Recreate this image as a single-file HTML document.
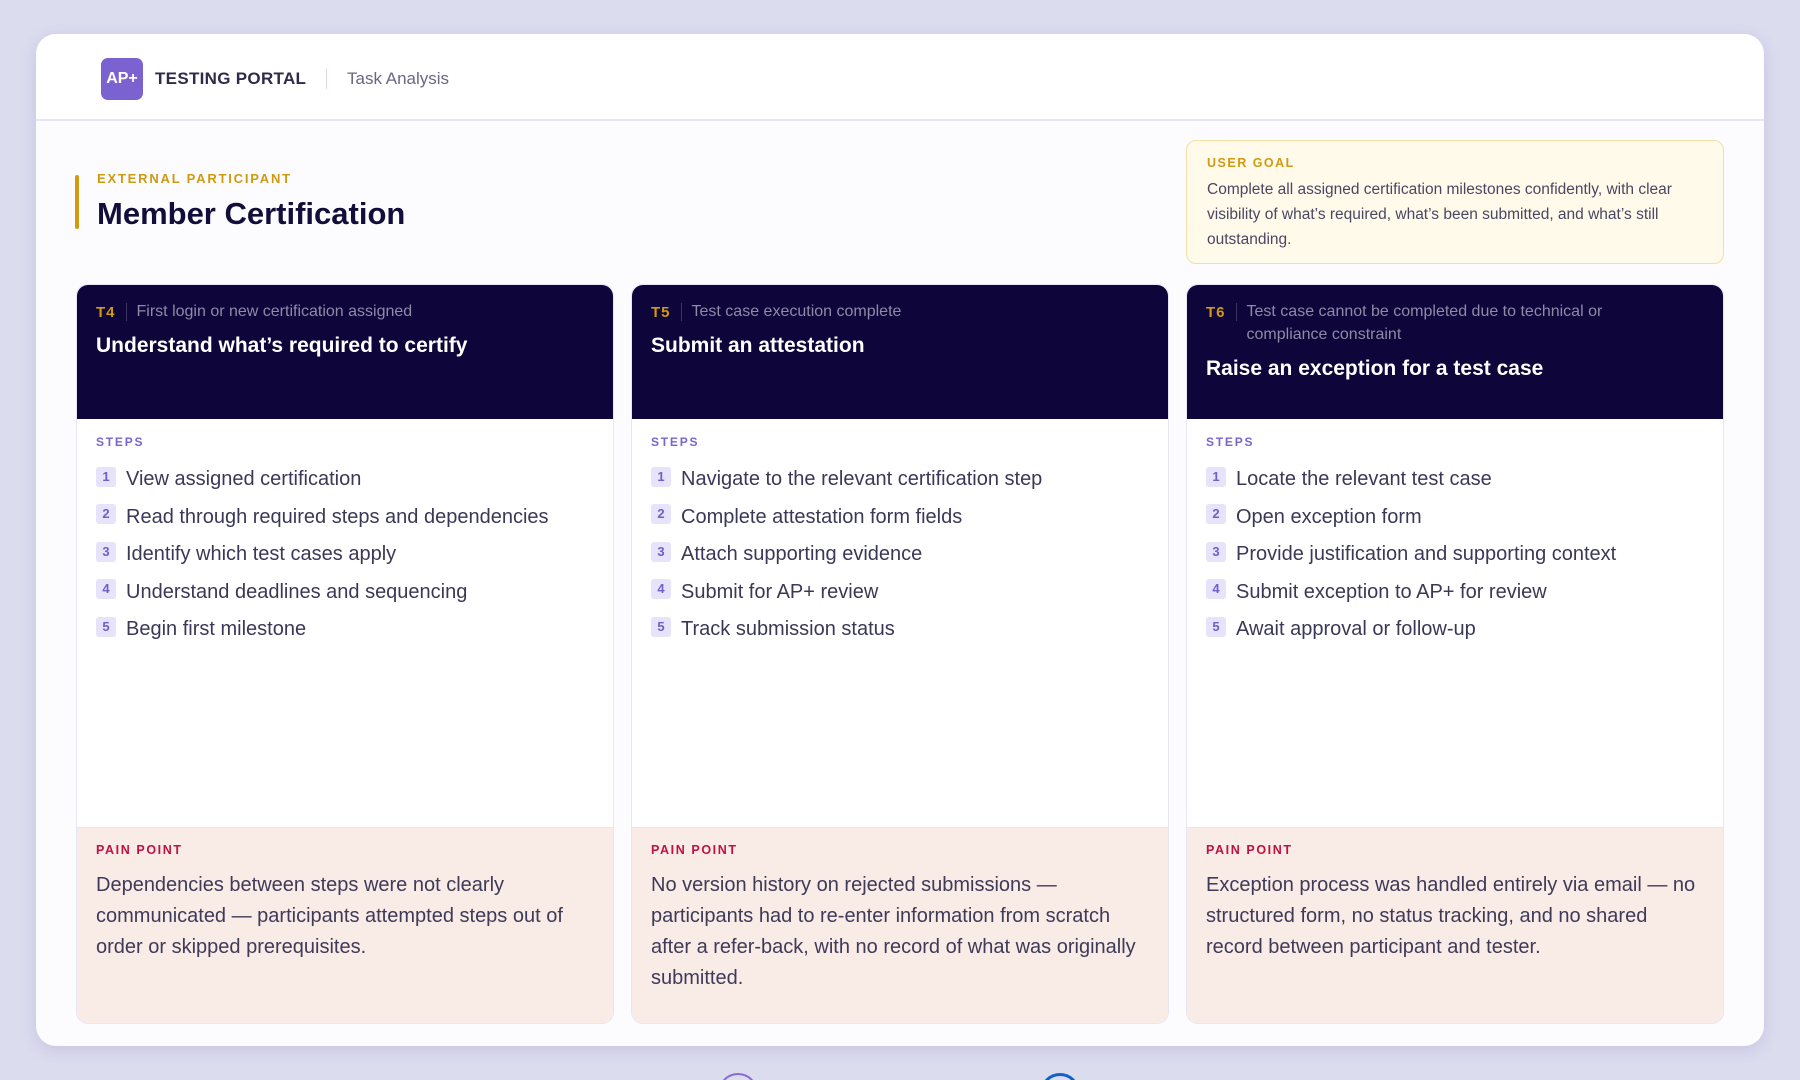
<!DOCTYPE html>
<html><head><meta charset="utf-8"><style>
*{box-sizing:border-box;margin:0;padding:0}
html,body{width:1800px;height:1080px;overflow:hidden}
body{background:#dcdcef;font-family:"Liberation Sans",sans-serif;color:#3a3656;position:relative}
.main{position:absolute;left:36px;top:34px;width:1728px;height:1012px;background:#fcfcff;border-radius:20px;box-shadow:0 4px 16px rgba(80,70,140,.15);overflow:hidden}
.hdr{position:absolute;left:0;top:0;width:100%;height:87px;border-bottom:2px solid #e6e5f1;background:#fff}
.logo{position:absolute;left:65px;top:24px;width:42px;height:42px;border-radius:7px;background:#7a62d1;color:#fff;font-weight:bold;font-size:16px;line-height:42px;text-align:center}
.brand{position:absolute;left:119px;top:35px;font-weight:bold;font-size:17px;color:#2e2b4a;letter-spacing:.3px}
.div{position:absolute;left:290px;top:35px;width:1px;height:20px;background:#d8d6e4}
.sub{position:absolute;left:311px;top:35px;font-size:17px;color:#6a6785}
.abar{position:absolute;left:39px;top:141px;width:4px;height:54px;background:#d29a0e;border-radius:2px}
.eyebrow{position:absolute;left:61px;top:137px;font-size:13px;font-weight:bold;color:#cf9a12;letter-spacing:1.8px}
.title{position:absolute;left:61px;top:162px;font-size:31px;font-weight:bold;color:#120d3b}
.goal{position:absolute;left:1150px;top:106px;width:538px;height:124px;background:#fffaea;border:1.5px solid #f3dfa5;border-radius:10px;padding:15px 20px}
.goal .l{font-size:12.5px;font-weight:bold;color:#cf9a12;letter-spacing:1.5px}
.goal p{font-size:15.5px;line-height:25px;color:#4a4763;margin-top:7px}
.card{position:absolute;top:250px;width:538px;height:740px;border-radius:12px;border:1.5px solid #e8e6f5;background:#fff;overflow:hidden}
.ch{height:134px;background:#0e053a;padding:15px 19px}
.meta{display:flex;font-size:16px;color:#8e8aa8;line-height:23px;padding-right:70px}
.meta b{flex:none;color:#d29a0e;font-size:15px;letter-spacing:1px;padding-right:10px;border-right:1px solid #3a3360;margin-right:10px;height:18px;margin-top:3px;line-height:20px}
.ct{color:#fff;font-size:21px;font-weight:bold;margin-top:11px}
.steps{padding:16px 19px}
.sl{font-size:12px;font-weight:bold;color:#7865d0;letter-spacing:1.8px;margin-bottom:12px}
.st{display:flex;align-items:center;height:37.5px;font-size:20px;color:#3b3857}
.n{width:20px;height:20px;border-radius:3px;background:#e6e3fa;color:#6f5fc8;font-size:13px;font-weight:bold;text-align:center;line-height:20px;margin-right:10px;margin-top:-6px}
.pain{position:absolute;left:0;top:542px;width:100%;height:200px;background:#f9ebe6;border-top:1.5px solid #ece6f2;padding:15px 19px}
.pl{font-size:12.5px;font-weight:bold;color:#c0123f;letter-spacing:1.6px}
.pain p{font-size:20px;line-height:31px;color:#3e3a58;margin-top:13px}
</style></head><body>
<div class="main">
<div class="hdr"><div class="logo">AP+</div><div class="brand">TESTING PORTAL</div><div class="div"></div><div class="sub">Task Analysis</div></div>
<div class="abar"></div><div class="eyebrow">EXTERNAL PARTICIPANT</div><div class="title">Member Certification</div>
<div class="goal"><div class="l">USER GOAL</div><p>Complete all assigned certification milestones confidently, with clear visibility of what’s required, what’s been submitted, and what’s still outstanding.</p></div>

<div class="card" style="left:40px">
<div class="ch"><div class="meta"><b>T4</b><span>First login or new certification assigned</span></div><div class="ct">Understand what’s required to certify</div></div>
<div class="steps"><div class="sl">STEPS</div>
<div class="st"><span class="n">1</span>View assigned certification</div>
<div class="st"><span class="n">2</span>Read through required steps and dependencies</div>
<div class="st"><span class="n">3</span>Identify which test cases apply</div>
<div class="st"><span class="n">4</span>Understand deadlines and sequencing</div>
<div class="st"><span class="n">5</span>Begin first milestone</div></div>
<div class="pain"><div class="pl">PAIN POINT</div><p>Dependencies between steps were not clearly communicated — participants attempted steps out of order or skipped prerequisites.</p></div>
</div>

<div class="card" style="left:595px">
<div class="ch"><div class="meta"><b>T5</b><span>Test case execution complete</span></div><div class="ct">Submit an attestation</div></div>
<div class="steps"><div class="sl">STEPS</div>
<div class="st"><span class="n">1</span>Navigate to the relevant certification step</div>
<div class="st"><span class="n">2</span>Complete attestation form fields</div>
<div class="st"><span class="n">3</span>Attach supporting evidence</div>
<div class="st"><span class="n">4</span>Submit for AP+ review</div>
<div class="st"><span class="n">5</span>Track submission status</div></div>
<div class="pain"><div class="pl">PAIN POINT</div><p>No version history on rejected submissions — participants had to re-enter information from scratch after a refer-back, with no record of what was originally submitted.</p></div>
</div>

<div class="card" style="left:1150px">
<div class="ch"><div class="meta"><b>T6</b><span>Test case cannot be completed due to technical or compliance constraint</span></div><div class="ct">Raise an exception for a test case</div></div>
<div class="steps"><div class="sl">STEPS</div>
<div class="st"><span class="n">1</span>Locate the relevant test case</div>
<div class="st"><span class="n">2</span>Open exception form</div>
<div class="st"><span class="n">3</span>Provide justification and supporting context</div>
<div class="st"><span class="n">4</span>Submit exception to AP+ for review</div>
<div class="st"><span class="n">5</span>Await approval or follow-up</div></div>
<div class="pain"><div class="pl">PAIN POINT</div><p>Exception process was handled entirely via email — no structured form, no status tracking, and no shared record between participant and tester.</p></div>
</div>
</div>
<div style="position:absolute;left:0;top:1060px;width:1800px;height:20px;overflow:hidden">
<div style="position:absolute;left:718px;top:13px;width:40px;height:40px;border-radius:50%;border:2px solid #8a6ad8"></div>
<div style="position:absolute;left:1040px;top:13px;width:40px;height:40px;border-radius:50%;border:3px solid #1560c8"></div>
</div>
</body></html>
